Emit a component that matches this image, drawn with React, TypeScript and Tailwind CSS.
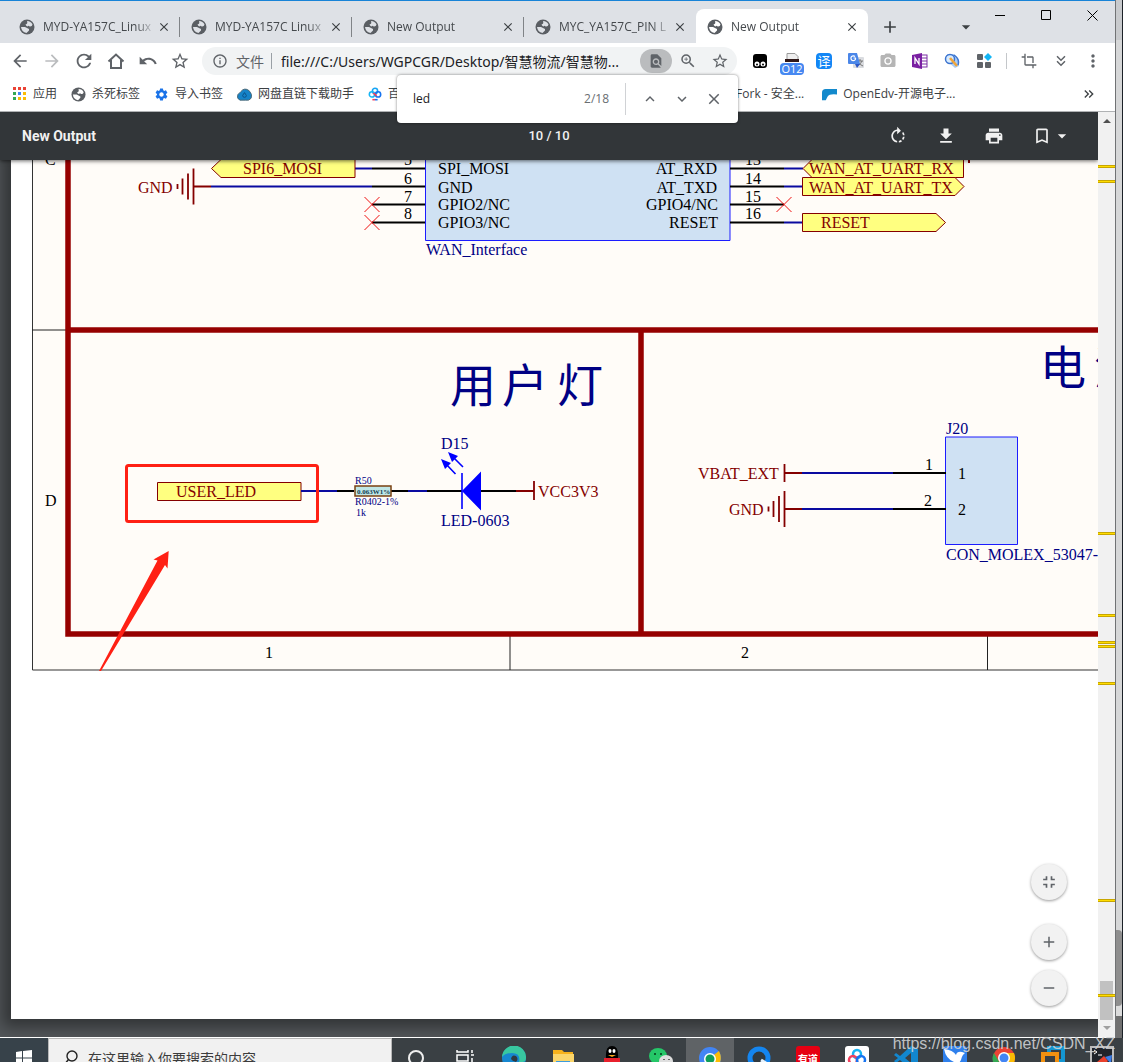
import type { ReactNode } from "react";
import {
  MdAdd,
  MdArrowBack,
  MdArrowDropDown,
  MdArrowForward,
  MdBookmarkBorder,
  MdClose,
  MdCrop,
  MdFileDownload,
  MdFindInPage,
  MdFullscreenExit,
  MdInfoOutline,
  MdKeyboardArrowDown,
  MdKeyboardArrowUp,
  MdKeyboardDoubleArrowDown,
  MdKeyboardDoubleArrowRight,
  MdMoreVert,
  MdPhotoCamera,
  MdPrint,
  MdRefresh,
  MdRemove,
  MdRotateRight,
  MdSettings,
  MdStarBorder,
  MdUndo,
  MdZoomIn,
} from "react-icons/md";

const tabs = [
  { title: "MYD-YA157C_Linux", active: false },
  { title: "MYD-YA157C Linux", active: false },
  { title: "New Output", active: false },
  { title: "MYC_YA157C_PIN L", active: false },
  { title: "New Output", active: true },
];

// hit positions along the scrollbar track, in px of a 924px track
const hits = [53, 68, 420, 501, 528, 532, 569, 786, 881];

const RED = "#840000";
const NAVY = "#000084";
const WIRE = "#0a0aa0";

function IconButton({ label, children, className = "" }: { label: string; children: ReactNode; className?: string }) {
  return (
    <button aria-label={label} className={`w-8 h-8 shrink-0 flex items-center justify-center text-[#5f6368] ${className}`}>
      {children}
    </button>
  );
}

function Globe({ className, land = "#fff" }: { className: string; land?: string }) {
  return (
    <svg className={className} viewBox="0 0 16 16">
      <circle cx="8" cy="8" r="7.500" fill="#5a5e63" />
      <path d="M8 2q4 0 5.500 3.500Q13 8 10.500 7.500 10 6 8.500 7.500 7 7 6.500 5.500 9 5 8 2z" fill={land} />
      <path d="M2 8h4l4 2v1.500L7.500 14Q2.500 13 2 8z" fill={land} />
    </svg>
  );
}

function TabStrip() {
  return (
    <div className="h-[43px] flex items-end bg-[#dee1e6] border-t border-[#1883d7] pl-2">
      {tabs.map((t, i) => (
        <div
          key={i}
          className={`relative w-[172px] h-[34px] shrink-0 flex items-center pt-[2px] pl-[11px] pr-2 ${t.active ? "bg-white rounded-t-lg" : ""}`}
        >
          <Globe className="w-4 h-4 shrink-0" land={t.active ? "#fff" : "#dee1e6"} />
          <a
            href="#tab"
            className="ml-2 flex-1 min-w-0 overflow-hidden whitespace-nowrap text-[12px] leading-4 text-[#45494d] [mask-image:linear-gradient(to_right,black_82%,transparent)]"
          >
            {t.title}
          </a>
          <button aria-label="Close tab" className="w-4 h-4 shrink-0 flex items-center justify-center text-[#3c4043]">
            <MdClose className="w-[14px] h-[14px]" />
          </button>
          {!t.active && i < 3 && <span className="absolute right-0 top-2 w-px h-5 bg-[#808387]" />}
        </div>
      ))}
      <IconButton label="New tab" className="ml-[6px]">
        <MdAdd className="w-5 h-5 text-[#3c4043]" />
      </IconButton>
      <div className="flex-1" />
      <IconButton label="Search tabs">
        <MdArrowDropDown className="w-5 h-5 text-[#3c4043]" />
      </IconButton>
      <div className="self-start flex h-7 ml-[-5px] text-black">
        <button aria-label="Minimize" className="w-[46px] flex items-center justify-center">
          <svg className="w-[11px] h-[11px]" viewBox="0 0 11 11" stroke="currentColor"><path d="M0 5.500h10" /></svg>
        </button>
        <button aria-label="Maximize" className="w-[46px] flex items-center justify-center">
          <svg className="w-[11px] h-[11px]" viewBox="0 0 11 11" fill="none" stroke="currentColor"><path d="M.5.5h9v9h-9z" /></svg>
        </button>
        <button aria-label="Close" className="w-[46px] flex items-center justify-center">
          <svg className="w-[11px] h-[11px]" viewBox="0 0 11 11" stroke="currentColor"><path d="M.5.5l10 10M10.5.5l-10 10" /></svg>
        </button>
      </div>
    </div>
  );
}

function Toolbar() {
  return (
    <div className="h-9 flex items-center bg-white pl-1 pr-[6px]">
      <IconButton label="Back"><MdArrowBack className="w-5 h-5" /></IconButton>
      <IconButton label="Forward"><MdArrowForward className="w-5 h-5 text-[#babcbe]" /></IconButton>
      <IconButton label="Reload"><MdRefresh className="w-[22px] h-[22px]" /></IconButton>
      <IconButton label="Home">
        <svg className="w-[18px] h-[18px]" viewBox="0 0 18 18" fill="none" stroke="currentColor" strokeWidth="2">
          <path d="M1.500 9.500L9 2.500l7.500 7M4 8v8h10V8" />
        </svg>
      </IconButton>
      <IconButton label="Undo"><MdUndo className="w-5 h-5" /></IconButton>
      <IconButton label="Favorite"><MdStarBorder className="w-5 h-5" /></IconButton>

      {/* Omnibox */}
      <div className="flex-1 min-w-0 h-7 ml-[6px] mr-[7px] rounded-full bg-[#f1f3f4] flex items-center pl-[10px] pr-px text-[#5f6368]">
        <MdInfoOutline className="w-4 h-4 shrink-0" />
        <span className="ml-2 text-[14px] shrink-0">文件</span>
        <span className="w-px h-4 mx-[7px] bg-[#9aa0a6] shrink-0" />
        <input
          aria-label="Address"
          readOnly
          value="file:///C:/Users/WGPCGR/Desktop/智慧物流/智慧物..."
          className="flex-1 min-w-0 ml-[2px] bg-transparent text-[14px] font-['Noto_Sans','Noto_Sans_CJK_SC',sans-serif] text-[#202124] outline-none"
        />
        <button aria-label="Find" className="w-8 h-6 shrink-0 rounded-full bg-[#babcbe] flex items-center justify-center">
          <MdFindInPage className="w-4 h-4" />
        </button>
        <IconButton label="Zoom"><MdZoomIn className="w-[18px] h-[18px]" /></IconButton>
        <IconButton label="Bookmark"><MdStarBorder className="w-[18px] h-[18px]" /></IconButton>
      </div>

      {/* Extensions */}
      <IconButton label="Tampermonkey">
        <svg className="w-4 h-4" viewBox="0 0 16 16">
          <rect x="1" y="1" width="14" height="14" rx="3" fill="#000" />
          <circle cx="5" cy="11" r="2.500" fill="#fff" />
          <circle cx="11" cy="11" r="2.500" fill="#fff" />
          <circle cx="5" cy="11.500" r="1" fill="#000" />
          <circle cx="11" cy="11.500" r="1" fill="#000" />
        </svg>
      </IconButton>
      <IconButton label="Incognito" className="relative">
        <svg className="w-4 h-4" viewBox="0 0 16 16">
          <path d="M3 .5h8l3 3V7H3z" fill="#eee" stroke="#999" />
          <path d="M1 6h14v3H1z" fill="#301818" />
        </svg>
        <span className="absolute left-1 top-[18px] w-6 h-3 rounded-sm bg-[#4688f1] text-white text-[11px] leading-3 text-center">O12</span>
      </IconButton>
      <IconButton label="Translate">
        <span className="w-4 h-4 rounded-sm bg-[#1386f5] text-white text-[13px] leading-4 text-center">译</span>
      </IconButton>
      <IconButton label="Google Translate">
        <svg className="w-4 h-4" viewBox="0 0 16 16">
          <rect x="5" y="4" width="11" height="11" rx="1" fill="#dadce0" />
          <path d="M9 8h6M12 6v2M9 13q4-2 5-5M10 9q2 3 5 4" stroke="#777" fill="none" />
          <path d="M1 0h8l3 11H1q-1 0-1-1V1q0-1 1-1z" fill="#4a86e8" />
          <path d="M7 11h5l-3 4z" fill="#2a56c6" />
          <path d="M8 5H5.500M7.700 5.500A2.400 2.400 0 1 1 7 3.500" stroke="#fff" fill="none" strokeWidth="1.200" />
        </svg>
      </IconButton>
      <IconButton label="Screenshot"><MdPhotoCamera className="w-[18px] h-[18px] text-[#b5b5b5]" /></IconButton>
      <IconButton label="OneNote">
        <svg className="w-4 h-4" viewBox="0 0 16 16">
          <rect x="8" y="2" width="7" height="12" fill="#fff" stroke="#7b2fa5" />
          <path d="M10 5h5M10 8h5M10 11h5" stroke="#7b2fa5" />
          <path d="M0 2l10-2v16L0 14z" fill="#7a1fa2" />
          <path d="M3 11V5l4 6V5" fill="none" stroke="#fff" strokeWidth="1.300" />
        </svg>
      </IconButton>
      <IconButton label="Search">
        <svg className="w-4 h-4" viewBox="0 0 16 16" fill="none">
          <path d="M3 1h7l5 6v6l-4 2-8-7z" fill="#a9ccf5" />
          <circle cx="6" cy="6" r="4.500" fill="#d8ecff" stroke="#3d74cf" strokeWidth="1.500" />
          <path d="M6 5l7 8" stroke="#f0a53a" strokeWidth="2.500" />
          <path d="M10 2q6 4 4 10" stroke="#3d74cf" strokeWidth="1.500" />
        </svg>
      </IconButton>
      <IconButton label="Extensions">
        <svg className="w-4 h-4" viewBox="0 0 16 16" fill="#5f6368">
          <rect x="1" y="1" width="6" height="6" rx="1" />
          <rect x="1" y="9" width="6" height="6" rx="1" />
          <rect x="9" y="9" width="6" height="6" rx="1" />
          <path d="M12 0l4 4-4 4-4-4z" fill="#12b5f5" />
        </svg>
      </IconButton>
      <span className="w-px h-4 mx-[6px] bg-[#c4c7ca] shrink-0" />
      <IconButton label="Crop"><MdCrop className="w-4 h-4" /></IconButton>
      <IconButton label="More tools"><MdKeyboardDoubleArrowDown className="w-[18px] h-[18px]" /></IconButton>
      <IconButton label="Menu"><MdMoreVert className="w-5 h-5" /></IconButton>
    </div>
  );
}

function AppsIcon() {
  const colors = ["#ea4335", "#ea4335", "#ea4335", "#34a853", "#4285f4", "#fbbc04", "#34a853", "#fbbc04", "#fbbc04"];
  return (
    <svg className="w-[14px] h-[14px] shrink-0" viewBox="0 0 14 14">
      {colors.map((c, i) => (
        <rect key={i} x={(i % 3) * 5} y={Math.floor(i / 3) * 5} width="3" height="3" fill={c} />
      ))}
    </svg>
  );
}

function Bookmark({ icon, children, className = "" }: { icon?: ReactNode; children: ReactNode; className?: string }) {
  return (
    <a href="#bookmark" className={`shrink-0 flex items-center gap-[6px] whitespace-nowrap ${className}`}>
      {icon}
      {children}
    </a>
  );
}

function BookmarkBar() {
  return (
    <div className="h-[33px] flex items-center bg-white border-b border-[#b0b2b4] pl-[13px] pr-[18px] pb-[2px] text-[12px] leading-4 text-[#3c4043]">
      <Bookmark icon={<AppsIcon />}>应用</Bookmark>
      <Bookmark className="ml-[14px]" icon={<Globe className="w-[15px] h-[15px]" />}>杀死标签</Bookmark>
      <Bookmark className="ml-[14px]" icon={<MdSettings className="w-[15px] h-[15px] text-[#1a73e8]" />}>导入书签</Bookmark>
      <Bookmark
        className="ml-[14px]"
        icon={
          <svg className="w-[15px] h-[15px]" viewBox="0 0 16 16">
            <path d="M3 14q-4-2-2-6 2-2 3-3 4-5 9-1 4 4 2 8-2 3-6 2z" fill="#1583c8" stroke="#4a6470" />
            <path d="M8 6l2 3a2 2 0 1 1-4 0z" fill="none" stroke="#0a4f86" />
          </svg>
        }
      >
        网盘直链下载助手
      </Bookmark>
      <Bookmark
        className="ml-[14px] w-[368px]"
        icon={
          <svg className="w-[14px] h-[14px]" viewBox="0 0 16 16" fill="none" strokeWidth="1.800">
            <circle cx="8" cy="4.500" r="3" stroke="#17a5f5" />
            <circle cx="4.500" cy="8.500" r="3" stroke="#17b5f5" />
            <circle cx="11.500" cy="8.500" r="3" stroke="#1673f0" />
            <path d="M6 7l4 3" stroke="#f0405e" />
            <path d="M5 14.500h3" stroke="#f0405e" />
            <path d="M8 14.500h3" stroke="#1673f0" />
          </svg>
        }
      >
        百
      </Bookmark>
      <Bookmark>Fork - 安全...</Bookmark>
      <Bookmark
        className="ml-[18px]"
        icon={
          <svg className="w-[15px] h-[15px]" viewBox="0 0 16 16">
            <path d="M0 14V6q0-4 4-4h12v6q-8-1-10 2l-2 4z" fill="#1389cc" />
          </svg>
        }
      >
        OpenEdv-开源电子...
      </Bookmark>
      <div className="flex-1" />
      <button aria-label="More bookmarks"><MdKeyboardDoubleArrowRight className="w-4 h-4" /></button>
    </div>
  );
}

function FindBar() {
  return (
    <div className="absolute z-20 top-[75px] right-[377px] w-[341px] h-12 bg-white rounded-sm shadow-[0_0_3px_rgba(0,0,0,0.5)] flex items-center pl-4 pr-2 text-[12px]">
      <input aria-label="Find in page" defaultValue="led" className="flex-1 min-w-0 text-[#202124] outline-none" />
      <span className="text-[#6a6e72]">2/18</span>
      <span className="w-px h-8 ml-4 mr-2 bg-[#d0d2d5]" />
      <IconButton label="Previous"><MdKeyboardArrowUp className="w-[18px] h-[18px]" /></IconButton>
      <IconButton label="Next"><MdKeyboardArrowDown className="w-[18px] h-[18px]" /></IconButton>
      <IconButton label="Close find bar"><MdClose className="w-[18px] h-[18px]" /></IconButton>
    </div>
  );
}

function PdfToolbar() {
  return (
    <div className="relative z-10 h-12 shrink-0 grid grid-cols-3 items-center bg-[#323639] text-[#f1f1f1] font-[Roboto] text-[13px] px-[22px] shadow-[0_1px_4px_rgba(0,0,0,0.6)]">
      <h1 className="text-[14px] font-bold">New Output</h1>
      <span className="text-center font-medium">10 / 10</span>
      <div className="flex justify-end items-center mr-1">
        <button aria-label="Rotate" className="w-12 flex justify-center"><MdRotateRight className="w-5 h-5" /></button>
        <button aria-label="Download" className="w-12 flex justify-center"><MdFileDownload className="w-5 h-5" /></button>
        <button aria-label="Print" className="w-12 flex justify-center"><MdPrint className="w-5 h-5" /></button>
        <button aria-label="Bookmarks" className="ml-[14px] flex items-center">
          <MdBookmarkBorder className="w-5 h-5" />
          <MdArrowDropDown className="w-5 h-5" />
        </button>
      </div>
    </div>
  );
}

function Label({ x, y, fill = "#000", size = 16, anchor, children }: { x: number | string; y: number; fill?: string; size?: number; anchor?: "end" | "middle"; children: ReactNode }) {
  return (
    <text x={x} y={y} fill={fill} fontSize={size} textAnchor={anchor}>
      {children}
    </text>
  );
}

// coloured segments of one horizontal wire
function Wire({ y, stops }: { y: number; stops: [number, number, string][] }) {
  return (
    <>
      {stops.map(([a, b, c]) => (
        <path key={a} d={`M${a} ${y}H${b}`} stroke={c} strokeWidth="2" />
      ))}
    </>
  );
}

function Ground({ x, y }: { x: number; y: number }) {
  return (
    <path
      d={`M${x} ${y - 18}v36M${x - 5.5} ${y - 13}v26M${x - 11} ${y - 8}v16M${x - 16} ${y - 2.5}v5`}
      stroke={RED}
      strokeWidth="1.800"
    />
  );
}

function NoConnect({ x, y }: { x: number; y: number }) {
  return <path d={`M${x - 7.5} ${y - 7.5}l15 15M${x + 7.5} ${y - 7.5}l-15 15`} stroke="#f01010" strokeWidth="1" />;
}

function Schematic() {
  return (
    <svg className="block w-[1087px] h-[859px] max-w-none" viewBox="11 160 1087 859" fontFamily="'Liberation Serif', serif" fill="none">
      <path d="M32.500 150H1200V670H32.500z" fill="#fffcf8" stroke="#333" />
      <path d="M32 330H66M510 636V670M987.500 636V670" stroke="#222" />
      <path d="M68 150V634H1200M68 330H1200M641 330V634" stroke="#960000" strokeWidth="5.500" />
      <Label x={45} y={165}>C</Label>
      <Label x={45} y={506}>D</Label>
      <Label x={269} y={658} anchor="middle">1</Label>
      <Label x={745} y={658} anchor="middle">2</Label>

      {/* WAN interface block */}
      <path d="M425.500 150H730V240.500H425.500z" fill="#cfe1f3" stroke="#1c1cff" />
      <Wire y={168.5} stops={[[355, 372, WIRE], [372, 425, "#000"], [730, 784, "#000"], [784, 803, WIRE]]} />
      <Wire y={186.5} stops={[[194, 211, RED], [211, 372, WIRE], [372, 425, "#000"], [730, 784, "#000"], [784, 802, WIRE]]} />
      <Wire y={204.5} stops={[[372, 425, "#000"], [730, 784, "#000"]]} />
      <Wire y={222.5} stops={[[372, 425, "#000"], [730, 784, "#000"], [784, 802, WIRE]]} />
      <Ground x={193.5} y={186.5} />
      <NoConnect x={372} y={204.5} />
      <NoConnect x={372} y={222.5} />
      <NoConnect x={784} y={204.5} />
      <g fill="#ffff80" stroke={RED}>
        <path d="M211.500 168.500L221 159.500H355V177.500H221z" />
        <path d="M803 168.500L812 159.500H963.500V177.500H812z" />
        <path d="M802.500 177.500H955L964 186.500L955 195.500H802.500z" />
        <path d="M802.500 213.500H936L945.500 222.500L936 231.500H802.500z" />
        <path d="M157.500 482.500H301V500.500H157.500z" />
      </g>
      <path d="M969 160v3" stroke={RED} strokeWidth="2" />
      <Label x={138} y={193} fill={RED}>GND</Label>
      <Label x={243} y={174} fill={RED}>SPI6_MOSI</Label>
      <Label x={809} y={174} fill={RED}>WAN_AT_UART_RX</Label>
      <Label x={809} y={193} fill={RED}>WAN_AT_UART_TX</Label>
      <Label x={821} y={228} fill={RED}>RESET</Label>
      <Label x={404} y={165}>5</Label>
      <Label x={404} y={184}>6</Label>
      <Label x={404} y={202}>7</Label>
      <Label x={404} y={219}>8</Label>
      <Label x={438} y={174}>SPI_MOSI</Label>
      <Label x={438} y={193}>GND</Label>
      <Label x={438} y={210}>GPIO2/NC</Label>
      <Label x={438} y={228}>GPIO3/NC</Label>
      <Label x={717} y={174} anchor="end">AT_RXD</Label>
      <Label x={717} y={193} anchor="end">AT_TXD</Label>
      <Label x={718} y={210} anchor="end">GPIO4/NC</Label>
      <Label x={718} y={228} anchor="end">RESET</Label>
      <Label x={745} y={165}>13</Label>
      <Label x={745} y={184}>14</Label>
      <Label x={745} y={202}>15</Label>
      <Label x={745} y={219}>16</Label>
      <Label x={426} y={255} fill={NAVY}>WAN_Interface</Label>

      {/* User LED */}
      <g fontFamily="'Noto Sans CJK SC', sans-serif">
        <Label x="450 502 557" y={402} fill={NAVY} size={46}>用户灯</Label>
        <Label x="1040 1094" y={384} fill={NAVY} size={46}>电源</Label>
      </g>
      <Label x={176} y={497} fill={RED}>USER_LED</Label>
      <Wire
        y={491}
        stops={[[301, 337, WIRE], [337, 354, "#000"], [391, 408, "#000"], [408, 427, WIRE], [427, 462, "#000"], [481, 516, "#000"], [516, 534, RED]]}
      />
      <rect x="355" y="486" width="36" height="10" fill="#bfe6e6" stroke="#7a4010" strokeWidth="1.500" />
      <text x="357" y="494" fontSize="7" fontWeight="bold" fill="#103c50">0.063W1%</text>
      <Label x={355} y={484} fill={NAVY} size={10}>R50</Label>
      <Label x={355} y={505} fill={NAVY} size={10}>R0402-1%</Label>
      <Label x={356} y={516} fill={NAVY} size={10}>1k</Label>
      <path d="M462 473V509M463 467L452 456M455.500 474L445 463" stroke="#0000ff" strokeWidth="1.600" />
      <path d="M462 491L481 471.500V510.500zM448 452l10 4-6 6zM441 459l10 4-6 6z" fill="#0000ff" />
      <path d="M534 481V500" stroke={RED} strokeWidth="1.800" />
      <Label x={441} y={449} fill={NAVY}>D15</Label>
      <Label x={441} y={526} fill={NAVY}>LED-0603</Label>
      <Label x={538} y={497} fill={RED}>VCC3V3</Label>

      {/* Battery connector */}
      <path d="M945.500 437H1017.500V544.500H945.500z" fill="#cfe1f3" stroke="#1c1cff" />
      <Wire y={473} stops={[[785, 802, RED], [802, 893, WIRE], [893, 946, "#000"]]} />
      <Wire y={509} stops={[[785, 802, RED], [802, 893, WIRE], [893, 946, "#000"]]} />
      <path d="M784.500 464V482" stroke={RED} strokeWidth="1.800" />
      <Ground x={784.5} y={509} />
      <Label x={698} y={479} fill={RED}>VBAT_EXT</Label>
      <Label x={729} y={515} fill={RED}>GND</Label>
      <Label x={946} y={434} fill={NAVY}>J20</Label>
      <Label x={925} y={470}>1</Label>
      <Label x={924} y={506}>2</Label>
      <Label x={958} y={479}>1</Label>
      <Label x={958} y={515}>2</Label>
      <Label x={946} y={560} fill={NAVY}>CON_MOLEX_53047-</Label>

      {/* Red annotations */}
      <rect x="126.500" y="465.500" width="191" height="56" rx="2" stroke="#ff2014" strokeWidth="3" />
      <path d="M168.700 551L153.500 559.500L157.500 560.500L99 671L101 671L165 565L167.500 568.500z" fill="#ff2014" />
    </svg>
  );
}

function ZoomButton({ label, children, className = "" }: { label: string; children: ReactNode; className?: string }) {
  return (
    <button
      aria-label={label}
      className={`w-9 h-9 rounded-full bg-[#f2f2f2] text-[#5f6368] flex items-center justify-center shadow-[0_1px_3px_rgba(0,0,0,0.4)] ${className}`}
    >
      {children}
    </button>
  );
}

function Scrollbar() {
  return (
    <div className="relative w-[17px] shrink-0 bg-[#f1f1f1] flex flex-col items-center justify-between py-[7px]">
      <svg className="w-2 h-1" viewBox="0 0 8 4"><path d="M0 4l4-4 4 4z" fill="#505050" /></svg>
      <svg className="w-2 h-1" viewBox="0 0 8 4"><path d="M0 0l4 4 4-4z" fill="#a0a0a0" /></svg>
      <div className="absolute left-[2px] bottom-[17px] w-[13px] h-[39px] bg-[#c1c1c1]" />
      {hits.map((h) => (
        <span
          key={h}
          className="absolute left-0 w-full h-[3px] bg-[#ffdd00] border-y border-[#c8a600]"
          style={{ top: `${(h / 924) * 100}%` }}
        />
      ))}
    </div>
  );
}

function Taskbar() {
  const apps: [string, ReactNode][] = [
    ["Cortana", <circle cx="12" cy="12" r="7" fill="none" stroke="#eee" strokeWidth="2" />],
    ["Task view", <path d="M4 4v2h11V4M4 9h11v6H4zM4 20v-2h11v2M19 4v3M19 12v8M18 9h3" fill="none" stroke="#fff" strokeWidth="1.500" />],
    ["Edge", <><circle cx="12" cy="12" r="12" fill="#1687d0" /><path d="M0 11A12 12 0 0 1 24 12q0 5-7 4 2-9-7-9-7 0-10 4z" fill="#38c7a0" /><path d="M9 13q1-5 5-3 3 3 0 6-4-1-5-3z" fill="#303a40" /></>],
    ["Explorer", <><path d="M2 4h9l2 2h9v15H2z" fill="#f7b21c" /><path d="M2 8h21v13H2z" fill="#fbd66b" /><path d="M5 15h14v6H5z" fill="#3d9bdc" /></>],
    ["QQ", <><path d="M6 12q-1-12 6-12t6 12l2 6H4z" fill="#000" /><ellipse cx="10" cy="5" rx="1.500" ry="2" fill="#fff" /><ellipse cx="14" cy="5" rx="1.500" ry="2" fill="#fff" /><path d="M8 9h8l-4 2z" fill="#f7a81c" /><path d="M4 12h16v4H4z" fill="#e8202c" /><path d="M7 16h10v5H7z" fill="#fff" /></>],
    ["WeChat", <><ellipse cx="9" cy="10" rx="9" ry="8" fill="#25c768" /><ellipse cx="17" cy="15" rx="7" ry="6" fill="#dedede" /><path d="M6 7v2M12 7v2" stroke="#0a5c2a" strokeWidth="2" /><path d="M15 13v1M20 13v1" stroke="#666" strokeWidth="2" /></>],
    ["Chromium", <><circle cx="12" cy="12" r="11" fill="#4285f4" /><path d="M12 12L21 5q4 8-1 15z" fill="#fbbc04" /><circle cx="12" cy="13" r="6" fill="#fff" /><circle cx="12" cy="13" r="4.500" fill="#0f9d58" /></>],
    ["QQ Browser", <><circle cx="12" cy="12" r="9" fill="#303a40" stroke="#1486f0" strokeWidth="5" /><path d="M14 14l8 5" stroke="#e5f3ff" strokeWidth="3" /></>],
    ["Youdao", <><rect width="24" height="24" rx="3" fill="#e60012" /><text x="2" y="17" fontSize="10" fontWeight="bold" fill="#fff">有道</text></>],
    ["Baidu Netdisk", <><rect width="24" height="24" rx="3" fill="#fff" /><g fill="none" strokeWidth="2.500"><circle cx="12" cy="8" r="4" stroke="#17b5f5" /><circle cx="8" cy="14" r="4" stroke="#f0405e" /><circle cx="16" cy="14" r="4" stroke="#1673f0" /></g></>],
    ["VS Code", <path d="M17 0l7 3v18l-7 3L6 14l-4 3-2-2 4-3-4-3 2-2 4 3zM17 7l-6 5 6 5z" fill="#1287cf" />],
    ["Xunlei", <><rect width="24" height="24" rx="3" fill="#2f80ec" /><path d="M1 3q9 1 12 6 1-4 6-3l3 1q-3 2-4 7-3 6-10 5l3-3Q3 13 1 3z" fill="#fff" /></>],
    ["Chrome", <><circle cx="12" cy="12" r="11" fill="#ea4335" /><path d="M2 7l7 12-1 4A11 11 0 0 1 2 7z" fill="#34a853" /><path d="M12 7h10q3 8-3 14l-7 2z" fill="#fbbc04" /><circle cx="12" cy="12" r="6" fill="#fff" /><circle cx="12" cy="12" r="4.500" fill="#4285f4" /></>],
    ["VMware", <g fill="none" strokeWidth="4"><path d="M8 7V2h14v13h-4" stroke="#1496d2" /><path d="M2 22V8h14v14" stroke="#f29111" /></g>],
    ["MobaXterm", <><rect x="1" y="1" width="22" height="22" fill="#20242a" stroke="#bbb" strokeWidth="2" /><path d="M4 4l3 2-3 2M8 9h4" stroke="#fff" fill="none" /><path d="M7 16l7-6 4 5-6 6z" fill="#e8402c" /><path d="M15 11l7-2-1 9z" fill="#3b7de8" /><path d="M13 20l6-4 4 6z" fill="#6cc93a" /></>],
  ];
  return (
    <footer className="h-6 shrink-0 overflow-hidden bg-[#3a4044]">
      <div className="h-10 flex">
        <button aria-label="Start" className="w-12 shrink-0 flex items-center justify-center bg-[#37424a]">
          <svg className="w-4 h-4" viewBox="0 0 16 16" fill="#fff">
            <path d="M0 2l6-1v6.500H0zM7 1l9-1v7.500H7zM0 8.500h6V15l-6-1zM7 8.500h9V16l-9-1z" />
          </svg>
        </button>
        <label className="w-[344px] shrink-0 flex items-center bg-[#f1f1f1] border border-[#b8b8b8] pl-[14px]">
          <svg className="w-4 h-4" viewBox="0 0 16 16" fill="none" stroke="#222" strokeWidth="1.400">
            <circle cx="9" cy="6" r="5" />
            <path d="M5.500 9.500L1 15" />
          </svg>
          <input
            aria-label="Search"
            placeholder="在这里输入你要搜索的内容"
            className="flex-1 min-w-0 ml-[9px] bg-transparent text-[14px] placeholder:text-[#3c3c3c] outline-none"
          />
        </label>
        <div className="flex-1 min-w-0 flex gap-px">
          {apps.map(([name, icon]) => (
            <button
              key={name}
              aria-label={name}
              className={`w-12 shrink-0 flex items-center justify-center ${name === "Chromium" ? "bg-[#5f6366]" : ""}`}
            >
              <svg className="w-6 h-6" viewBox="0 0 24 24">{icon}</svg>
            </button>
          ))}
        </div>
      </div>
    </footer>
  );
}

export default function App() {
  return (
    <div className="relative h-screen flex flex-col overflow-hidden bg-[#3a4044] font-['Open_Sans','Noto_Sans_CJK_SC',sans-serif]">
      <div className="flex-1 min-h-0 flex">
        <main className="relative flex-1 min-w-0 flex flex-col border-b border-white">
          <TabStrip />
          <Toolbar />
          <BookmarkBar />
          <FindBar />
          <div className="flex-1 min-h-0 flex">
            <section className="relative flex-1 min-w-0 flex flex-col overflow-hidden bg-[#525659]">
              <PdfToolbar />
              <div className="flex-1 min-h-0 ml-[11px] mb-[18px] bg-white overflow-hidden shadow-[0_0_14px_8px_rgba(0,0,0,0.4)]">
                <Schematic />
              </div>
              <div className="absolute right-[31px] bottom-[31px] flex flex-col">
                <ZoomButton label="Fit to page"><MdFullscreenExit className="w-5 h-5" /></ZoomButton>
                <ZoomButton label="Zoom in" className="mt-6"><MdAdd className="w-[18px] h-[18px]" /></ZoomButton>
                <ZoomButton label="Zoom out" className="mt-[10px]"><MdRemove className="w-[18px] h-[18px]" /></ZoomButton>
              </div>
            </section>
            <Scrollbar />
          </div>
        </main>
        {/* Sliver of the window behind */}
        <aside className="w-2 shrink-0 flex flex-col border-l border-[#707274] border-r border-r-[#1c2228] bg-[#d6d7d8]">
          <div className="h-10 bg-[#c8cacd]" />
          <div className="flex-1" />
          <div className="h-[76px] rounded-r bg-[#8e8e8e]" />
          <div className="h-8 bg-[#707070] border-t-[10px] border-[#dcdcdc]" />
        </aside>
      </div>
      <Taskbar />
      <p className="absolute right-2 bottom-2 text-[16px] leading-5 text-[#d0d2d4]/90 font-['Liberation_Sans',sans-serif]">
        https://blog.csdn.net/CSDN_XZ
      </p>
    </div>
  );
}
